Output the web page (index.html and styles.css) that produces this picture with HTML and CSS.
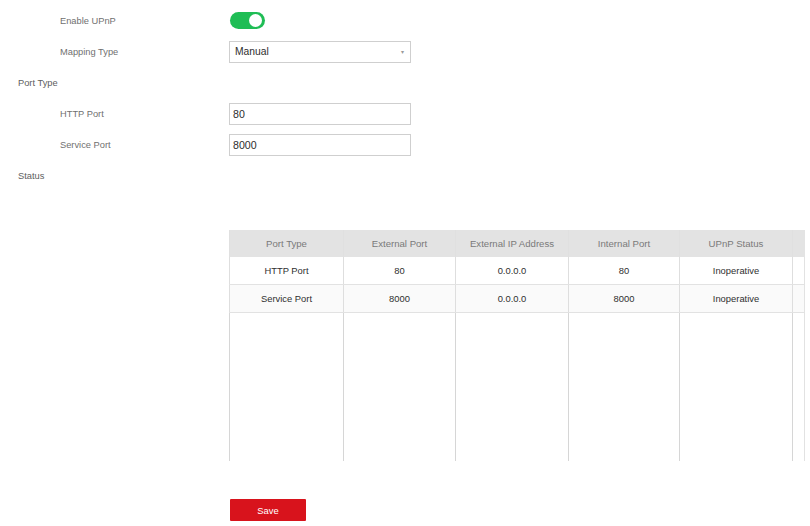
FILE: index.html
```html
<!DOCTYPE html>
<html lang="en">
<head>
<meta charset="utf-8">
<title>UPnP</title>
<link rel="stylesheet" href="styles.css">
</head>
<body>
<div class="page">
  <div class="form">
    <div class="row sub">
      <span class="label">Enable UPnP</span>
      <span class="switch on"><span class="knob"></span></span>
    </div>
    <div class="row sub">
      <span class="label">Mapping Type</span>
      <div class="select"><span>Manual</span><span class="caret">&#9662;</span></div>
    </div>
    <div class="row section">
      <span class="label">Port Type</span>
    </div>
    <div class="row sub">
      <span class="label">HTTP Port</span>
      <div class="input">80</div>
    </div>
    <div class="row sub">
      <span class="label">Service Port</span>
      <div class="input">8000</div>
    </div>
    <div class="row section">
      <span class="label">Status</span>
    </div>
  </div>

  <table class="grid">
    <colgroup>
      <col class="c1"><col class="c2"><col class="c3"><col class="c4"><col class="c5"><col class="gutter">
    </colgroup>
    <thead>
      <tr>
        <th>Port Type</th>
        <th>External Port</th>
        <th>External IP Address</th>
        <th>Internal Port</th>
        <th>UPnP Status</th>
        <th></th>
      </tr>
    </thead>
    <tbody>
      <tr>
        <td>HTTP Port</td><td>80</td><td>0.0.0.0</td><td>80</td><td>Inoperative</td><td></td>
      </tr>
      <tr class="alt">
        <td>Service Port</td><td>8000</td><td>0.0.0.0</td><td>8000</td><td>Inoperative</td><td></td>
      </tr>
      <tr class="filler">
        <td></td><td></td><td></td><td></td><td></td><td></td>
      </tr>
    </tbody>
  </table>

  <div class="actions">
    <button class="btn-save" type="button">Save</button>
  </div>
</div>
</body>
</html>
```
FILE: styles.css
```css
html, body {
  margin: 0;
  padding: 0;
  background: #ffffff;
}

body {
  font-family: "Liberation Sans", Arial, sans-serif;
  color: #555;
  width: 810px;
  height: 526px;
  overflow: hidden;
}

.page {
  padding-top: 5px;
}

.form {
  display: flex;
  flex-direction: column;
}

.row {
  display: flex;
  align-items: center;
  height: 31px;
}

.row .label {
  font-size: 9.3px;
  color: #707070;
}

.row.sub .label {
  width: 169px;
  padding-left: 60px;
}

.row.section .label {
  padding-left: 18px;
  color: #5e5e5e;
}

/* toggle switch */
.switch {
  position: relative;
  width: 35px;
  height: 17px;
  margin-left: 1px;
  border-radius: 9px;
  background: #ccc;
}

.switch.on {
  background: #1fbd55;
}

.switch .knob {
  position: absolute;
  top: 2px;
  right: 3px;
  width: 13px;
  height: 13px;
  border-radius: 50%;
  background: #fff;
}

/* text fields */
.select,
.input {
  box-sizing: border-box;
  width: 182px;
  height: 22px;
  border: 1px solid #cfcfcf;
  background: #fff;
  display: flex;
  align-items: center;
  padding: 0 4px 0 5px;
  font-size: 10.3px;
  color: #2e2e2e;
}

.input {
  padding-left: 3px;
  font-size: 10.6px;
}

.select {
  justify-content: space-between;
}

.select .caret {
  font-size: 6px;
  color: #999;
  margin-right: 2px;
}

/* status table */
.grid {
  margin-top: 39px;
  margin-left: 229px;
  width: 575px;
  border-collapse: collapse;
  table-layout: fixed;
  text-align: center;
}

.grid col.c1 { width: 114px; }
.grid col.c2 { width: 112px; }
.grid col.c3 { width: 113px; }
.grid col.c4 { width: 111px; }
.grid col.c5 { width: 113px; }
.grid col.gutter { width: 12px; }

.grid th {
  height: 27px;
  padding: 0;
  background: #e3e3e3;
  color: #7a7a7a;
  font-size: 9.6px;
  font-weight: normal;
  border-left: 1px solid #e0e0e0;
}

.grid td {
  height: 27px;
  padding: 0;
  color: #2f2f2f;
  font-size: 9.4px;
  border-left: 1px solid #dedede;
  border-bottom: 1px solid #e2e2e2;
}

.grid td:last-child {
  border-right: 1px solid #e2e2e2;
}

.grid tr.alt td {
  background: #fafafa;
}

.grid tr.filler td {
  height: 148px;
  border-bottom: none;
  border-left-color: #d6d6d6;
}

.actions {
  padding-left: 230px;
  margin-top: 38px;
}

.btn-save {
  width: 76px;
  height: 22px;
  border: none;
  border-radius: 1px;
  background: #d8131c;
  color: #fff;
  font-family: "Liberation Sans", Arial, sans-serif;
  font-size: 9.4px;
  padding: 0;
}
```
